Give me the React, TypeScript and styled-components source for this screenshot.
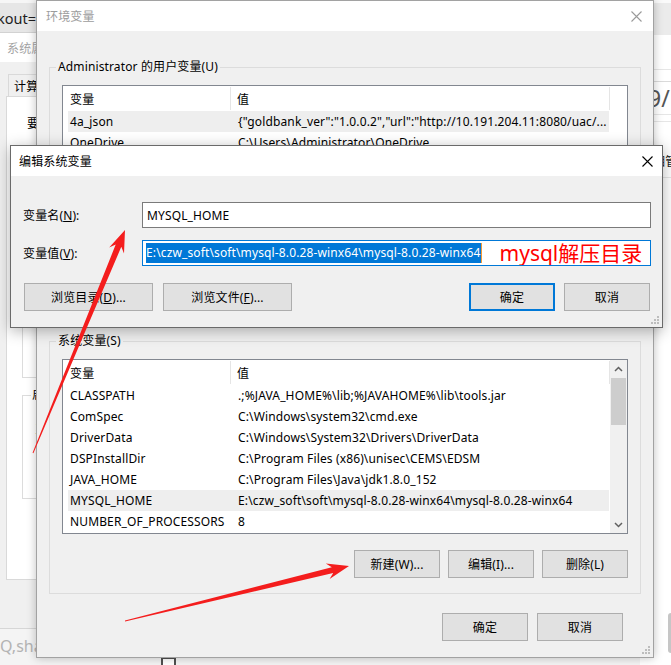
import React from "react";
import styled, { createGlobalStyle } from "styled-components";

const FONT = `"Noto Sans", "Noto Sans CJK SC", sans-serif`;

const Global = createGlobalStyle`
  html, body { margin: 0; padding: 0; }
  body { width: 671px; height: 665px; overflow: hidden; background: #f4f4f4; }
  * { box-sizing: border-box; }
`;

const Desktop = styled.div`
  position: relative;
  width: 671px;
  height: 665px;
  overflow: hidden;
  background: #f4f4f4;
  font-family: ${FONT};
  font-size: 12px;
  letter-spacing: 0.13px;
  color: #000;
`;

/* ---------- left background window (系统属性) ---------- */
const BackLeft = styled.div`
  position: absolute;
  left: 0;
  top: 0;
  width: 40px;
  height: 629px;
  background: #f0f0f0;
  border-bottom: 1px solid #d6d6d6;
  display: flex;
  flex-direction: column;
  overflow: hidden;
`;
const BackBand = styled.div`
  height: 33px;
  flex-shrink: 0;
  background: #e6e6e6;
  border-top: 3px solid #f6f6f6;
  border-bottom: 1px solid #d2d2d2;
  display: flex;
  align-items: center;
  justify-content: flex-end;
  padding-right: 4px;
  font-size: 14.5px;
  letter-spacing: 0;
  color: #1e1e1e;
  white-space: nowrap;
  overflow: hidden;
`;
const BackTitle = styled.div`
  height: 29px;
  flex-shrink: 0;
  background: #fff;
  display: flex;
  align-items: center;
  padding-left: 7px;
  color: #a3a3a3;
  white-space: nowrap;
  overflow: hidden;
`;
const BackBody = styled.div`
  flex: 1;
  padding: 12px 0 0 6px;
  display: flex;
  flex-direction: column;
`;
const BackTab = styled.div`
  margin-left: 2px;
  height: 22px;
  flex-shrink: 0;
  border: 1px solid #d9d9d9;
  border-bottom: none;
  padding-left: 5px;
  display: flex;
  align-items: center;
  white-space: nowrap;
  overflow: hidden;
`;
const BackPanel = styled.div`
  height: 484px;
  background: #fff;
  border: 1px solid #d9d9d9;
  border-right: none;
  padding-left: 15px;
  display: flex;
  flex-direction: column;
  white-space: nowrap;
`;
const BackNote = styled.div`
  margin: 18px 0 0 5px;
  line-height: 17px;
`;
const BackGroup = styled.fieldset<{ $mt: number; $h: number }>`
  margin: ${(p) => p.$mt}px 0 0 0;
  padding: 0 0 0 12px;
  border: 1px solid #dcdcdc;
  height: ${(p) => p.$h}px;
  min-width: 0;
  line-height: 17px;
`;
const BackLegend = styled.legend`
  padding: 0 1px;
  margin-left: -4px;
  line-height: 16px;
`;
const BackGroupText = styled.div`
  margin-top: 18px;
`;

/* ---------- right background window ---------- */
const BackRight = styled.div`
  position: absolute;
  left: 640px;
  top: 0;
  width: 31px;
  height: 665px;
  background: #fff;
  display: flex;
  flex-direction: column;
  white-space: nowrap;
  overflow: hidden;
`;
const RightStrip = styled.div<{ $h: number; $bg?: string; $line?: string; $pl?: number }>`
  height: ${(p) => p.$h}px;
  flex-shrink: 0;
  padding-left: ${(p) => p.$pl || 0}px;
  background: ${(p) => p.$bg || "transparent"};
  border-bottom: ${(p) => (p.$line ? `1px solid ${p.$line}` : "none")};
  display: flex;
  align-items: center;
`;
const RightBig = styled.span`
  font-size: 23px;
  letter-spacing: 0;
  color: #555;
`;
const RightText = styled.span`
  margin-top: 22px;
  color: #222;
`;
const RightScroll = styled.div`
  margin-top: auto;
  margin-bottom: 12px;
  align-self: flex-end;
  width: 3px;
  height: 40px;
  border-radius: 3px 0 0 3px;
  background: #c6c6c6;
`;

/* ---------- bottom background app ---------- */
const BackBottom = styled.div`
  position: absolute;
  left: 0;
  top: 629px;
  width: 671px;
  height: 36px;
  display: flex;
  align-items: flex-start;
  white-space: nowrap;
`;
const BackSearch = styled.span`
  width: 161px;
  margin-top: 6px;
  font-size: 16px;
  letter-spacing: 0;
  color: #b3b3b3;
`;
const BackCheck = styled.div`
  margin-top: 28px;
  width: 15px;
  height: 15px;
  border: 2px solid #505050;
  background: #fff;
`;

/* ---------- windows ---------- */
const MainWindow = styled.div`
  position: absolute;
  left: 36px;
  top: 0;
  width: 618px;
  height: 658px;
  border: 1px solid #a2a2a2;
  background: #f0f0f0;
  box-shadow: 0 0 9px rgba(0, 0, 0, 0.25);
  display: flex;
  flex-direction: column;
`;
const EditDialog = styled.div`
  position: absolute;
  left: 10px;
  top: 145px;
  width: 653px;
  height: 183px;
  border: 1px solid #6a6a6a;
  background: #f0f0f0;
  box-shadow: 0 3px 14px rgba(0, 0, 0, 0.3);
  display: flex;
  flex-direction: column;
`;
const TitleBar = styled.div<{ $active?: boolean; $pl: number; $pr: number }>`
  height: 30px;
  flex-shrink: 0;
  background: #fff;
  display: flex;
  align-items: center;
  justify-content: space-between;
  padding: 0 ${(p) => p.$pr}px 0 ${(p) => p.$pl}px;
  color: ${(p) => (p.$active ? "#000" : "#9c9c9c")};
  font-size: 12px;
`;
const MainBody = styled.div`
  flex: 1;
  padding: 28px 12px 0;
  display: flex;
  flex-direction: column;
`;
const GroupBox = styled.fieldset<{ $mt?: number }>`
  margin: ${(p) => p.$mt || 0}px 0 0;
  padding: 10px 12px 15px;
  border: 1px solid #dcdcdc;
  min-width: 0;
`;
const Legend = styled.legend`
  padding: 0 2px;
  margin-left: -6px;
  line-height: 16px;
`;
const ListBox = styled.div<{ $h: number }>`
  height: ${(p) => p.$h}px;
  border: 1px solid #828790;
  background: #fff;
  display: flex;
  overflow: hidden;
`;
const ListMain = styled.div`
  flex: 1;
  min-width: 0;
  display: flex;
  flex-direction: column;
`;
const Header = styled.div`
  height: 25px;
  flex-shrink: 0;
  width: 547px;
  display: flex;
  padding: 1px 0;
`;
const HeadCell = styled.div<{ $w?: number; $pl: number }>`
  ${(p) => (p.$w ? `width: ${p.$w}px;` : "flex: 1;")}
  padding-left: ${(p) => p.$pl}px;
  border-right: 1px solid #e5e5e5;
  display: flex;
  align-items: center;
`;
const Row = styled.div<{ $selected?: boolean }>`
  height: 21px;
  flex-shrink: 0;
  width: 541px;
  margin-left: 5px;
  display: flex;
  align-items: center;
  background: ${(p) => (p.$selected ? "#eeeeee" : "transparent")};
  white-space: nowrap;
`;
const NameCell = styled.div`
  width: 163px;
  flex-shrink: 0;
  padding-left: 2px;
  overflow: hidden;
`;
const ValueCell = styled.div`
  flex: 1;
  min-width: 0;
  padding-left: 7px;
  overflow: hidden;
`;
const Scrollbar = styled.div`
  width: 17px;
  flex-shrink: 0;
  background: #f0f0f0;
  display: flex;
  flex-direction: column;
  align-items: center;
`;
const ScrollArrow = styled.div`
  width: 17px;
  height: 17px;
  flex-shrink: 0;
  display: flex;
  align-items: center;
  justify-content: center;
`;
const ScrollThumb = styled.div`
  margin-top: 1px;
  width: 15px;
  height: 47px;
  background: #cdcdcd;
`;
const ScrollSpace = styled.div`
  flex: 1;
`;
const ButtonRow = styled.div<{ $mt: number; $gap: number; $pr?: number }>`
  display: flex;
  justify-content: flex-end;
  margin-top: ${(p) => p.$mt}px;
  gap: ${(p) => p.$gap}px;
  padding-right: ${(p) => p.$pr || 0}px;
`;
const Button = styled.button<{ $w: number; $default?: boolean }>`
  width: ${(p) => p.$w}px;
  height: 28px;
  padding: 0;
  margin: 0;
  background: #e1e1e1;
  border: ${(p) => (p.$default ? "2px solid #0078d7" : "1px solid #adadad")};
  font-family: ${FONT};
  font-size: 12px;
  letter-spacing: 0.13px;
  color: #000;
  white-space: nowrap;
`;

/* ---------- edit dialog parts ---------- */
const EditBody = styled.div`
  flex: 1;
  padding: 26px 11px 0 12px;
  display: flex;
  flex-direction: column;
`;
const FieldRow = styled.div<{ $mt?: number }>`
  display: flex;
  align-items: center;
  margin-top: ${(p) => p.$mt || 0}px;
`;
const FieldLabel = styled.div`
  width: 119px;
  flex-shrink: 0;
`;
const TextBox = styled.div<{ $focused?: boolean }>`
  flex: 1;
  height: 26px;
  border: 1px solid ${(p) => (p.$focused ? "#0078d7" : "#7a7a7a")};
  background: #fff;
  display: flex;
  align-items: center;
  padding-left: ${(p) => (p.$focused ? 3 : 4)}px;
  white-space: nowrap;
  overflow: hidden;
`;
const Selection = styled.span`
  background: #0078d7;
  color: #fff;
  line-height: 20px;
`;
const Caret = styled.span`
  width: 1px;
  height: 20px;
  background: #f39b36;
`;
const Annotation = styled.span`
  margin-left: 18px;
  color: #ff0000;
  font-size: 21px;
  letter-spacing: 0;
  line-height: 24px;
`;
const DialogButtons = styled.div`
  display: flex;
  justify-content: space-between;
  margin-top: 17px;
  padding: 0 1px;
`;
const ButtonGroup = styled.div<{ $gap: number }>`
  display: flex;
  gap: ${(p) => p.$gap}px;
`;
const Grip = styled.svg`
  position: absolute;
  right: 2px;
  bottom: 2px;
`;
const Arrows = styled.svg`
  position: absolute;
  left: 0;
  top: 0;
  pointer-events: none;
`;

const CloseIcon = ({ color }: { color: string }) => (
  <svg width="11" height="11" viewBox="0 0 11 11">
    <path d="M0.5 0.5 L10.5 10.5 M10.5 0.5 L0.5 10.5" stroke={color} strokeWidth="1.1" />
  </svg>
);

const GripIcon = () => (
  <Grip width="10" height="10" viewBox="0 0 10 10">
    {[
      [7, 1],
      [7, 4],
      [4, 4],
      [7, 7],
      [4, 7],
      [1, 7],
    ].map(([x, y], i) => (
      <rect key={i} x={x} y={y} width="2" height="2" fill="#bdbdbd" />
    ))}
  </Grip>
);

const Chevron = ({ up }: { up?: boolean }) => (
  <svg width="9" height="6" viewBox="0 0 9 6">
    <path d={up ? "M1 5 L4.5 1.5 L8 5" : "M1 1 L4.5 4.5 L8 1"} stroke="#606060" strokeWidth="1.5" fill="none" />
  </svg>
);

type Item = [string, string];

const userVars: Item[] = [
  ["4a_json", '{"goldbank_ver":"1.0.0.2","url":"http://10.191.204.11:8080/uac/...'],
  ["OneDrive", "C:\\Users\\Administrator\\OneDrive"],
  ["Path", "C:\\Users\\Administrator\\AppData\\Local\\Microsoft\\WindowsApps;"],
  ["TEMP", "%USERPROFILE%\\AppData\\Local\\Temp"],
  ["TMP", "%USERPROFILE%\\AppData\\Local\\Temp"],
];

const sysVars: Item[] = [
  ["CLASSPATH", ".;%JAVA_HOME%\\lib;%JAVAHOME%\\lib\\tools.jar"],
  ["ComSpec", "C:\\Windows\\system32\\cmd.exe"],
  ["DriverData", "C:\\Windows\\System32\\Drivers\\DriverData"],
  ["DSPInstallDir", "C:\\Program Files (x86)\\unisec\\CEMS\\EDSM"],
  ["JAVA_HOME", "C:\\Program Files\\Java\\jdk1.8.0_152"],
  ["MYSQL_HOME", "E:\\czw_soft\\soft\\mysql-8.0.28-winx64\\mysql-8.0.28-winx64"],
  ["NUMBER_OF_PROCESSORS", "8"],
];

const VarList = ({
  items,
  selected,
  height,
  scroll,
}: {
  items: Item[];
  selected: number;
  height: number;
  scroll?: boolean;
}) => (
  <ListBox $h={height}>
    <ListMain>
      <Header>
        <HeadCell $w={168} $pl={7}>变量</HeadCell>
        <HeadCell $pl={6}>值</HeadCell>
      </Header>
      {items.map(([name, value], i) => (
        <Row key={name} $selected={i === selected}>
          <NameCell>{name}</NameCell>
          <ValueCell>{value}</ValueCell>
        </Row>
      ))}
    </ListMain>
    {scroll && (
      <Scrollbar>
        <ScrollArrow>
          <Chevron up />
        </ScrollArrow>
        <ScrollThumb />
        <ScrollSpace />
        <ScrollArrow>
          <Chevron />
        </ScrollArrow>
      </Scrollbar>
    )}
  </ListBox>
);

const arrow1 =
  "M32.6 452.8 L115.7 244.6 L109.2 247.4 L125 230 L124.0 253.4 L121.3 246.8 L33.4 453.2 Z";
const arrow2 =
  "M125 620.6 L331.8 567.2 L325.8 563.5 L349 566 L329.6 579.1 L333.2 573.0 L125 621.4 Z";

export default function App() {
  return (
    <Desktop>
      <Global />

      <BackBottom>
        <BackSearch>Q,shadow</BackSearch>
        <BackCheck />
      </BackBottom>

      <BackLeft>
        <BackBand>checkout=</BackBand>
        <BackTitle>系统属性</BackTitle>
        <BackBody>
          <BackTab>计算机名</BackTab>
          <BackPanel>
            <BackNote>要进行大多数更改，你必须作为管理员登录。</BackNote>
            <BackGroup $mt={20} $h={226}>
              <BackLegend>用户配置文件</BackLegend>
            </BackGroup>
            <BackGroup $mt={9} $h={112}>
              <BackLegend>启动和故障恢复</BackLegend>
              <BackGroupText>系统启动、系统故障和调试信息</BackGroupText>
            </BackGroup>
          </BackPanel>
        </BackBody>
      </BackLeft>

      <BackRight>
        <RightStrip $h={3} $bg="#fafafa" />
        <RightStrip $h={32} $bg="#ebebeb" />
        <RightStrip $h={35} $line="#e6e6e6" />
        <RightStrip $h={12} $line="#dadada" />
        <RightStrip $h={33} $line="#e6e6e6" $pl={8}>
          <RightBig>9/16</RightBig>
        </RightStrip>
        <RightStrip $h={7} $line="#e6e6e6" />
        <RightStrip $h={56} $line="#e6e6e6" $pl={13}>
          <RightText>相管理</RightText>
        </RightStrip>
        <RightScroll />
      </BackRight>

      <MainWindow>
        <TitleBar $pl={9} $pr={11}>
          <span>环境变量</span>
          <CloseIcon color="#9a9a9a" />
        </TitleBar>
        <MainBody>
          <GroupBox>
            <Legend>Administrator 的用户变量(U)</Legend>
            <VarList items={userVars} selected={0} height={160} />
            <ButtonRow $mt={18} $gap={8}>
              <Button $w={86}>新建(N)...</Button>
              <Button $w={86}>编辑(E)...</Button>
              <Button $w={86}>删除(D)</Button>
            </ButtonRow>
          </GroupBox>
          <GroupBox $mt={26}>
            <Legend>系统变量(S)</Legend>
            <VarList items={sysVars} selected={5} height={175} scroll />
            <ButtonRow $mt={16} $gap={8}>
              <Button $w={86}>新建(W)...</Button>
              <Button $w={86}>编辑(I)...</Button>
              <Button $w={86}>删除(L)</Button>
            </ButtonRow>
          </GroupBox>
          <ButtonRow $mt={19} $gap={9} $pr={18}>
            <Button $w={86}>确定</Button>
            <Button $w={86}>取消</Button>
          </ButtonRow>
        </MainBody>
        <GripIcon />
      </MainWindow>

      <EditDialog>
        <TitleBar $active $pl={8} $pr={9}>
          <span>编辑系统变量</span>
          <CloseIcon color="#000" />
        </TitleBar>
        <EditBody>
          <FieldRow>
            <FieldLabel>
              变量名(<u>N</u>):
            </FieldLabel>
            <TextBox>MYSQL_HOME</TextBox>
          </FieldRow>
          <FieldRow $mt={12}>
            <FieldLabel>
              变量值(<u>V</u>):
            </FieldLabel>
            <TextBox $focused>
              <Selection>E:\czw_soft\soft\mysql-8.0.28-winx64\mysql-8.0.28-winx64</Selection>
              <Caret />
              <Annotation>mysql解压目录</Annotation>
            </TextBox>
          </FieldRow>
          <DialogButtons>
            <ButtonGroup $gap={10}>
              <Button $w={129}>
                浏览目录(<u>D</u>)...
              </Button>
              <Button $w={129}>
                浏览文件(<u>F</u>)...
              </Button>
            </ButtonGroup>
            <ButtonGroup $gap={9}>
              <Button $w={86} $default>
                确定
              </Button>
              <Button $w={86}>取消</Button>
            </ButtonGroup>
          </DialogButtons>
        </EditBody>
        <GripIcon />
      </EditDialog>

      <Arrows width="671" height="665" viewBox="0 0 671 665">
        <path d={arrow1} fill="#f41d1d" />
        <path d={arrow2} fill="#f41d1d" />
      </Arrows>
    </Desktop>
  );
}
